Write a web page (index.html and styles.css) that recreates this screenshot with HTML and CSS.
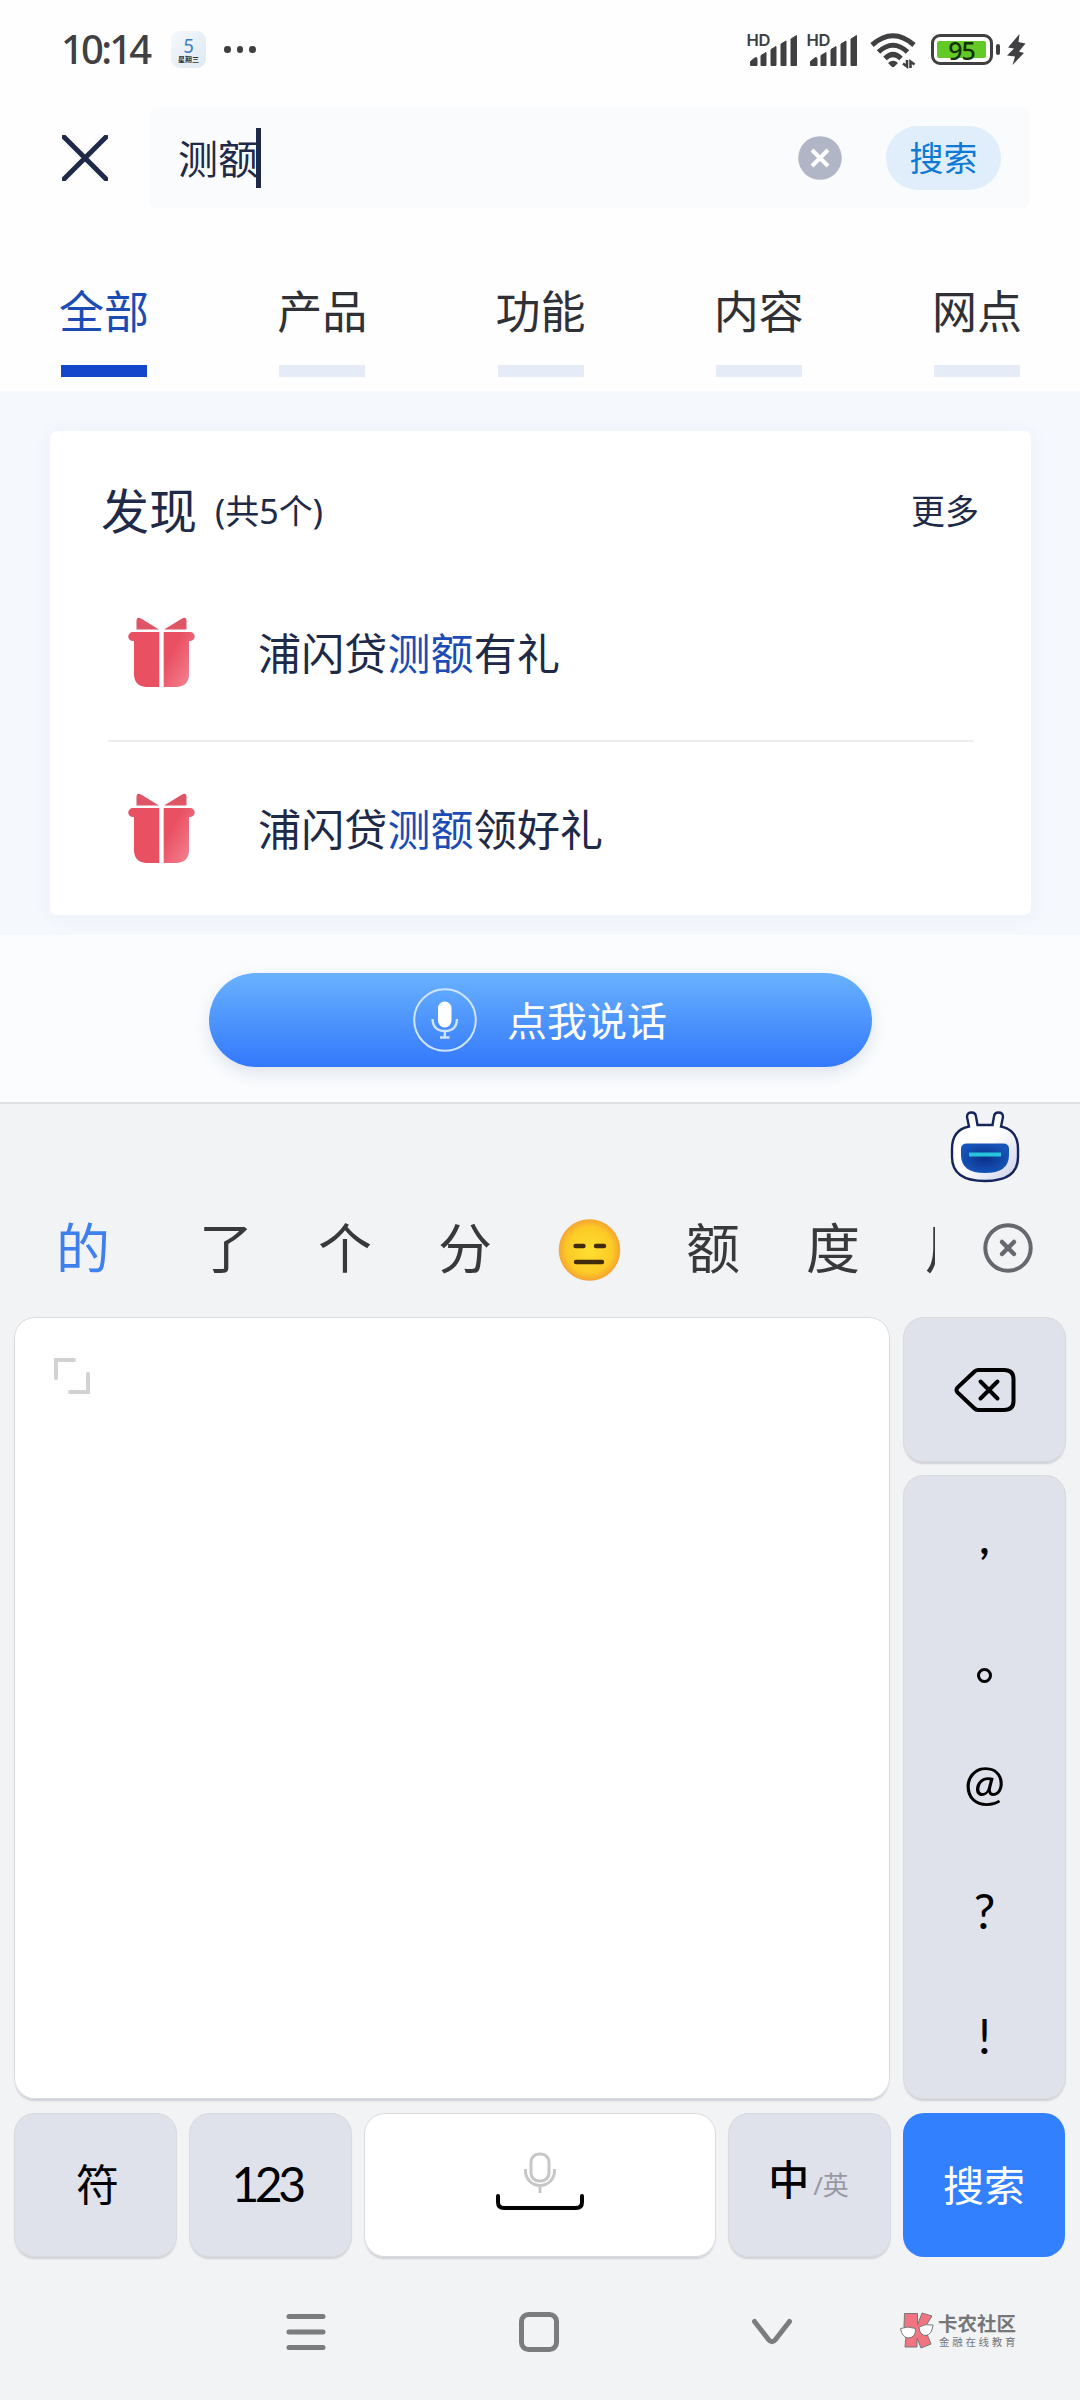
FILE: index.html
```html
<!DOCTYPE html>
<html lang="zh-CN">
<head>
<meta charset="utf-8">
<title>搜索</title>
<link rel="stylesheet" href="styles.css">
</head>
<body>
<svg width="0" height="0" class="defs">
  <defs>
    <linearGradient id="giftBody" x1="0" y1="0" x2="1" y2="1"><stop offset=".3" stop-color="#e95062"/><stop offset="1" stop-color="#f58a98"/></linearGradient>
    <symbol id="gift" viewBox="0 0 67 70">
      <path d="M8.500 12.500V4Q8.500-1 13 1.500L31 12.500ZM58.500 12.500V4Q58.500-1 54 1.500L36 12.500Z" fill="#e05566"/>
      <path d="M5 15H31.300V70H18Q6 69 6 57V24H4.500A4.500 4.500 0 0 1 5 15Z" fill="#e95062"/>
      <path d="M35.700 15H62A4.500 4.500 0 0 1 62.500 24H61V57Q61 69 49 70H35.700Z" fill="url(#giftBody)"/>
    </symbol>
    <symbol id="signal" viewBox="0 0 50 31">
      <path d="M1.500 30.500V26.500L6 22.800Q8 22 8 24V30.500ZM12 30.500V20.500L17 17.500V30.500ZM22 30.500V14.500L27 11.500V30.500ZM32 30.500V9L37 6V30.500ZM42 30.500V4L47.500 .5V30.500Z" fill="#404043" stroke="#404043" stroke-linejoin="round"/>
    </symbol>
  </defs>
</svg>
<header class="status">
  <span class="clock">10:14</span>
  <span class="cal"><b>5</b><i>星期三</i></span>
  <span class="dots"><i></i><i></i><i></i></span>
  <span class="sig sig-first"><b>HD</b><svg width="50" height="31"><use href="#signal"/></svg></span>
  <span class="sig"><b>HD</b><svg width="50" height="31"><use href="#signal"/></svg></span>
  <svg class="wifi" width="48" height="37" viewBox="0 0 48 37">
    <g fill="none" stroke="#404043" stroke-width="5"><path d="M2 13Q23-5.500 44 13"/><path d="M8.500 20Q23 6.500 37.500 20"/><path d="M15 26.500Q23 18.500 31 26.500"/></g>
    <path d="M18 31Q23 26.500 28 31L24.500 34.500Q23 36 21.500 34.500Z" fill="#404043"/>
    <path d="M33 31.500L37 34.500V28M40.500 36V29.500L44.500 32.500" fill="none" stroke="#404043" stroke-width="2.600"/>
  </svg>
  <span class="battery"><b>95</b></span><span class="nub"></span>
  <svg class="bolt" width="19" height="31" viewBox="0 0 19 31"><path d="M12.500 0L1 13.500L7 14.500L0 21.500L8 22.500L5.500 31L17 19L12 17.500L18.500 9.500L11.500 8Z" fill="#404043"/></svg>
</header>

<section class="search">
  <svg class="close" width="46" height="46" viewBox="0 0 46 46"><path d="M2 2L44 44M44 2L2 44" stroke="#1e2a48" stroke-width="5" stroke-linecap="round"/></svg>
  <div class="field">
    <span class="query">测额</span><span class="caret"></span>
    <svg class="clear" width="44" height="44" viewBox="0 0 44 44"><circle cx="22" cy="22" r="21.800" fill="#b0b6c6"/><path d="M14 14L30 30M30 14L14 30" stroke="#fff" stroke-width="4"/></svg>
    <span class="go">搜索</span>
  </div>
</section>

<nav class="tabs">
  <span class="tab on">全部</span><span class="tab">产品</span><span class="tab">功能</span><span class="tab">内容</span><span class="tab">网点</span>
</nav>

<main class="content">
  <div class="card">
    <div class="head"><h2>发现</h2><span class="count">(共5个)</span><span class="more">更多</span></div>
    <div class="item"><svg width="67" height="70"><use href="#gift"/></svg><p>浦闪贷<em>测额</em>有礼</p></div>
    <div class="item"><svg width="67" height="70"><use href="#gift"/></svg><p>浦闪贷<em>测额</em>领好礼</p></div>
  </div>
</main>

<section class="voice">
  <div class="talk">
    <svg width="64" height="64" viewBox="0 0 64 64"><circle cx="32" cy="32" r="30.800" fill="none" stroke="#cfe5ff" stroke-width="2"/><rect x="25" y="13.500" width="13.500" height="26" rx="6.700" fill="#fff"/><path d="M19.500 31Q20 43 31.800 43T44 31M31.800 43V49M27 49.500H36.500" fill="none" stroke="#cfe5ff" stroke-width="2.400"/></svg>
    <span>点我说话</span>
  </div>
</section>

<section class="keyboard">
  <div class="mascot">
    <svg width="72" height="72" viewBox="0 0 72 72">
      <defs><linearGradient id="shell" x1="0" y1="0" x2="1" y2="1"><stop offset=".5" stop-color="#fff"/><stop offset="1" stop-color="#c9cbea"/></linearGradient><radialGradient id="visor"><stop offset="0" stop-color="#0b2f86"/><stop offset="1" stop-color="#1553b8"/></radialGradient></defs>
      <path d="M20 15.500L18 6Q18 1.500 22.500 1.500Q26.500 1.500 27 5.500L28.500 14H43.500L45 5.500Q45.500 1.500 49.500 1.500Q54 1.500 54 6L52 15.500Q69 19 69 38V46Q69 70 36 70Q3 70 3 46V38Q3 19 20 15.500Z" fill="url(#shell)" stroke="#14265a" stroke-width="2.400"/>
      <path d="M18 32.500H54Q60 32.500 60 38V44Q60 62 36 62Q12 62 12 44V38Q12 32.500 18 32.500Z" fill="url(#visor)"/>
      <path d="M20 43.500H52" stroke="#27c4dc" stroke-width="4"/>
    </svg>
  </div>
  <div class="cands">
    <div class="list"><span class="c1">的</span><span class="c2">了</span><span>个</span><span>分</span>
      <svg class="emoji" width="63" height="62" viewBox="0 0 63 62"><defs><radialGradient id="face"><stop offset="0" stop-color="#fde030"/><stop offset=".75" stop-color="#fdc926"/><stop offset="1" stop-color="#f5a432"/></radialGradient></defs><circle cx="31.500" cy="31" r="30.800" fill="url(#face)"/><path d="M17.500 27H25.500M38 27H46M18 43H44" stroke="#422b0d" stroke-width="4.400" stroke-linecap="round"/></svg>
      <span>额</span><span>度</span><span class="cut">用</span></div>
    <svg class="dismiss" width="52" height="52" viewBox="0 0 52 52"><circle cx="26" cy="26" r="22.700" fill="none" stroke="#67686d" stroke-width="4"/><path d="M20 20L32 32M32 20L20 32" stroke="#67686d" stroke-width="4.500" stroke-linecap="round"/></svg>
  </div>
  <div class="pad">
    <div class="key ink"><svg width="36" height="36" viewBox="0 0 36 36"><path d="M20 2H2V20M34 16V34H16" fill="none" stroke="#d2d2d3" stroke-width="4" stroke-linecap="round"/></svg></div>
    <div class="side">
      <div class="key del"><svg width="62" height="46" viewBox="0 0 62 46"><path d="M24 3H50Q59.500 3 59.500 12V34Q59.500 43 50 43H24Q22 43 20 41L3.500 25.500Q1.500 23 3.500 20.500L20 5Q22 3 24 3Z" fill="none" stroke="#000" stroke-width="4"/><path d="M26.500 14.500L43.500 31.500M43.500 14.500L26.500 31.500" stroke="#000" stroke-width="4" stroke-linecap="round"/></svg></div>
      <div class="key marks"><span class="comma">,</span><span class="stop"></span><span class="at">@</span><span>?</span><span>!</span></div>
    </div>
  </div>
  <div class="row">
    <div class="key sym">符</div>
    <div class="key num">123</div>
    <div class="key space"><svg width="90" height="60" viewBox="0 0 90 60"><rect x="36" y="2" width="18" height="27" rx="8" fill="none" stroke="#c6c6c7" stroke-width="3"/><path d="M30.500 17V19A14.500 14.500 0 0 0 59.500 19V17M45 34V41" fill="none" stroke="#c6c6c7" stroke-width="3"/><path d="M3 44V50Q3 56 9 56H81Q87 56 87 50V44" fill="none" stroke="#000" stroke-width="4" stroke-linecap="round"/></svg></div>
    <div class="key lang"><b>中</b><i>/英</i></div>
    <div class="key enter">搜索</div>
  </div>
</section>

<footer class="nav">
  <svg class="menu" width="40" height="40" viewBox="0 0 40 40"><path d="M3 4.500H37M3 20H37M3 35.500H37" stroke="#7b7c7e" stroke-width="5" stroke-linecap="round"/></svg>
  <svg class="home" width="42" height="42" viewBox="0 0 42 42"><rect x="3.500" y="3.500" width="35" height="35" rx="7" fill="none" stroke="#7b7c7e" stroke-width="5"/></svg>
  <svg class="down" width="42" height="28" viewBox="0 0 42 28"><path d="M3.500 3.500L17.500 21.500Q21 26 24.500 21.500L38.500 3.500" fill="none" stroke="#7b7c7e" stroke-width="5" stroke-linecap="round"/></svg>
  <div class="brand">
    <svg width="35" height="37" viewBox="0 0 35 37"><path d="M5.500 1.500H18.500V13L23 1L33 4L25.500 16L32 32L22 36L18 26V35H6L7 24L5 14Z" fill="#f07580" stroke="#77777a" stroke-width="1"/><g fill="#fff" stroke="#77777a" stroke-width="1"><path d="M1.500 16.500Q9 13.500 16.500 16.500Q17 25.500 9.500 26Q3 25.500 1.500 16.500Z"/><path d="M20 15Q26 11.500 34 13Q33 22.500 27 23.500Q20.500 23.500 20 15Z"/></g></svg>
    <div><b>卡农社区</b><i>金融在线教育</i></div>
  </div>
</footer>
</body>
</html>
```
FILE: styles.css
```css
* { box-sizing: border-box; }
body { margin: 0; width: 1080px; height: 2400px; display: flex; flex-direction: column; background: #fefefe; color: #1e2a48; font-family: "Noto Sans", "Noto Sans CJK SC", sans-serif; overflow: hidden; }
i, em { font-style: normal; }
h2, p { margin: 0; font-weight: 400; }
svg { display: block; flex: none; }
.defs { position: absolute; }

.status { height: 107px; flex: none; padding: 30px 0 0 61px; display: flex; align-items: flex-start; color: #404043; }
.clock { width: 110px; font: 500 40px/38px "Noto Sans", sans-serif; letter-spacing: -2.800px; }
.cal { width: 35px; height: 37px; margin-top: 1px; border-radius: 9px; background: linear-gradient(135deg, #f4f8fb, #dfe9f1); display: flex; flex-direction: column; align-items: center; }
.cal b { font: 400 19px/19px Lato, sans-serif; color: #3d7cc4; margin-top: 5px; }
.cal i { font: 700 7px/8px "Noto Sans CJK SC", sans-serif; color: #333; }
.dots { display: flex; gap: 6px; margin: 16px 0 0 18px; }
.dots i { width: 6.500px; height: 6.500px; border-radius: 50%; background: #404043; }
.sig { width: 60px; height: 36px; display: grid; }
.sig-first { margin-left: 491px; }
.sig b { grid-area: 1/1; font: 600 16.500px/15px Inter, sans-serif; letter-spacing: -.3px; margin: 3px 0 0; }
.sig svg { grid-area: 1/1; margin: 5px 0 0 2px; }
.wifi { margin: 2px 0 0 3px; }
.battery { width: 62px; height: 31px; margin: 4px 0 0 13px; padding: 3.500px; border: 3.500px solid #404043; border-radius: 9px; }
.battery b { display: block; height: 17px; background: #62c927; border-radius: 2px; font: 500 25px/18px "Noto Sans", sans-serif; letter-spacing: -1px; text-align: center; color: #143009; }
.nub { width: 4px; height: 11px; margin: 14px 7px 0 3px; border-radius: 2px; background: #404043; }
.bolt { margin-top: 4px; }

.search { height: 101px; flex: none; display: flex; align-items: center; padding: 0 50px 0 62px; }
.field { flex: 1; height: 101px; margin-left: 41px; padding: 0 29px 0 29px; border-radius: 9px; background: #fafbfd; display: flex; align-items: center; }
.query { font-size: 40px; line-height: 103px; width: 78px; padding-top: 2px; white-space: nowrap; }
.caret { width: 5px; height: 60px; background: #1e2a48; z-index: 1; }
.clear { margin-left: auto; margin-right: 44px; }
.go { width: 115px; height: 64px; border-radius: 32px; background: #e0edfa; color: #0d7ad6; font-size: 34px; line-height: 65px; text-align: center; }

.tabs { height: 183px; flex: none; display: flex; justify-content: space-between; padding: 77px 58px 0 59px; color: #303136; }
.tab { width: 90px; height: 92px; font-size: 45px; line-height: 54px; white-space: nowrap; display: flex; flex-direction: column; justify-content: space-between; }
.tab::after { content: ""; height: 12px; margin: 0 2px; background: #e6ebf8; }
.on { color: #1b4cb5; }
.on::after { background: #1446cc; }

.content { height: 544px; flex: none; background: #f5f8fd; padding: 40px 49px 0 50px; }
.card { height: 484px; border-radius: 7px; background: #fff; padding: 0 52px 0 51px; box-shadow: 0 2px 20px rgba(60, 110, 190, .06); }
.head { height: 134px; padding-top: 26px; display: flex; align-items: center; line-height: 108px; }
.head h2 { font-size: 48px; }
.count { font-size: 34px; margin-left: 18px; }
.more { font-size: 34px; margin-left: auto; }
.item { height: 175px; margin: 0 6px 0 7px; padding-left: 20px; display: flex; align-items: center; }
.item svg { margin-top: -2px; }
.item + .item { border-top: 2px solid #ebedef; }
.item p { font-size: 43px; letter-spacing: .15px; margin-left: 63px; line-height: 60px; padding-top: 2px; }
.item em { color: #1b4cb5; }

.voice { height: 169px; flex: none; background: #fafcfe; border-bottom: 2px solid #dfe0e3; padding: 38px 0 0 209px; }
.talk { width: 663px; height: 94px; border-radius: 47px; background: linear-gradient(#69b2ff, #3378fb); box-shadow: 0 6px 16px rgba(60, 80, 120, .14); display: flex; align-items: center; padding-left: 204px; color: #fff; font-size: 40px; }
.talk svg { margin-top: -1px; }
.talk span { margin-left: 30px; line-height: 60px; padding-top: 1px; }

.keyboard { height: 1156px; flex: none; background: #f2f3f5; padding: 0 14px; }
.mascot { height: 79px; padding: 7px 0 0 935px; }
.cands { height: 134px; padding-bottom: 5px; display: flex; align-items: center; font-size: 54px; color: #38393b; }
.list { width: 921px; padding-left: 42px; display: flex; align-items: center; overflow: hidden; line-height: 80px; }
.list span { width: 54px; flex: none; margin-right: 66px; }
.list .c1 { color: #3f80ee; margin-right: 89px; }
.list .c2 { margin-right: 65px; }
.list .emoji { margin: 4px 65px 0 0; }
.list .cut { margin-left: -1px; }
.dismiss { margin-left: 47px; }
.key { border-radius: 21px; background: #e0e2eb; box-shadow: inset 0 0 0 1px #d8dade, 0 3px 2px -1px #cfd0d6; color: #000; display: flex; align-items: center; justify-content: center; font-size: 43px; line-height: 60px; }
.pad { height: 782px; display: flex; gap: 13px; }
.ink { width: 876px; background: #fff; align-items: flex-start; justify-content: flex-start; padding: 41px 0 0 40px; }
.side { width: 163px; display: flex; flex-direction: column; gap: 13px; }
.del { height: 145px; flex: none; }
.marks { flex: 1; flex-direction: column; justify-content: flex-start; padding-top: 27px; font: 400 48px/125px Lato, sans-serif; }
.marks span { height: 125px; flex: none; }
.marks .comma { line-height: 0; height: 120px; padding-top: 36px; font-weight: 700; font-size: 42px; }
.marks .stop { width: 15px; height: 15px; border: 3px solid #000; border-radius: 50%; margin: 46px 0 40px; }
.marks .at { font-size: 49px; line-height: 117px; }
.row { height: 144px; margin-top: 14px; display: grid; grid-template-columns: 163px 163px 352px 163px 162px; gap: 12px; }
.sym { padding-left: 4px; }
.num { font: 400 48px/60px Lato, sans-serif; letter-spacing: -4.500px; padding: 0 8px 2px 0; }
.space { background: #fff; padding-bottom: 6px; }
.lang b { font-weight: 500; font-size: 41px; margin: -12px 0 0 -2px; }
.lang i { font-size: 26px; color: #989aa3; margin-left: 4px; }
.enter { background: #3380ff; color: #fff; font-size: 41px; box-shadow: none; }

.nav { flex: 1; background: #f2f3f5; display: flex; padding-left: 286px; }
.menu { margin-top: 52px; }
.home { margin: 51px 0 0 192px; }
.down { margin: 58px 0 0 191px; }
.brand { margin: 52px 0 0 106px; display: flex; gap: 4px; color: #77777a; }
.brand div { display: flex; flex-direction: column; white-space: nowrap; }
.brand b { font: 700 19.500px/22px "Noto Sans CJK SC", sans-serif; }
.brand i { font: 400 10.500px/15px "Noto Sans CJK SC", sans-serif; letter-spacing: 2.700px; margin-left: 1px; }
```
